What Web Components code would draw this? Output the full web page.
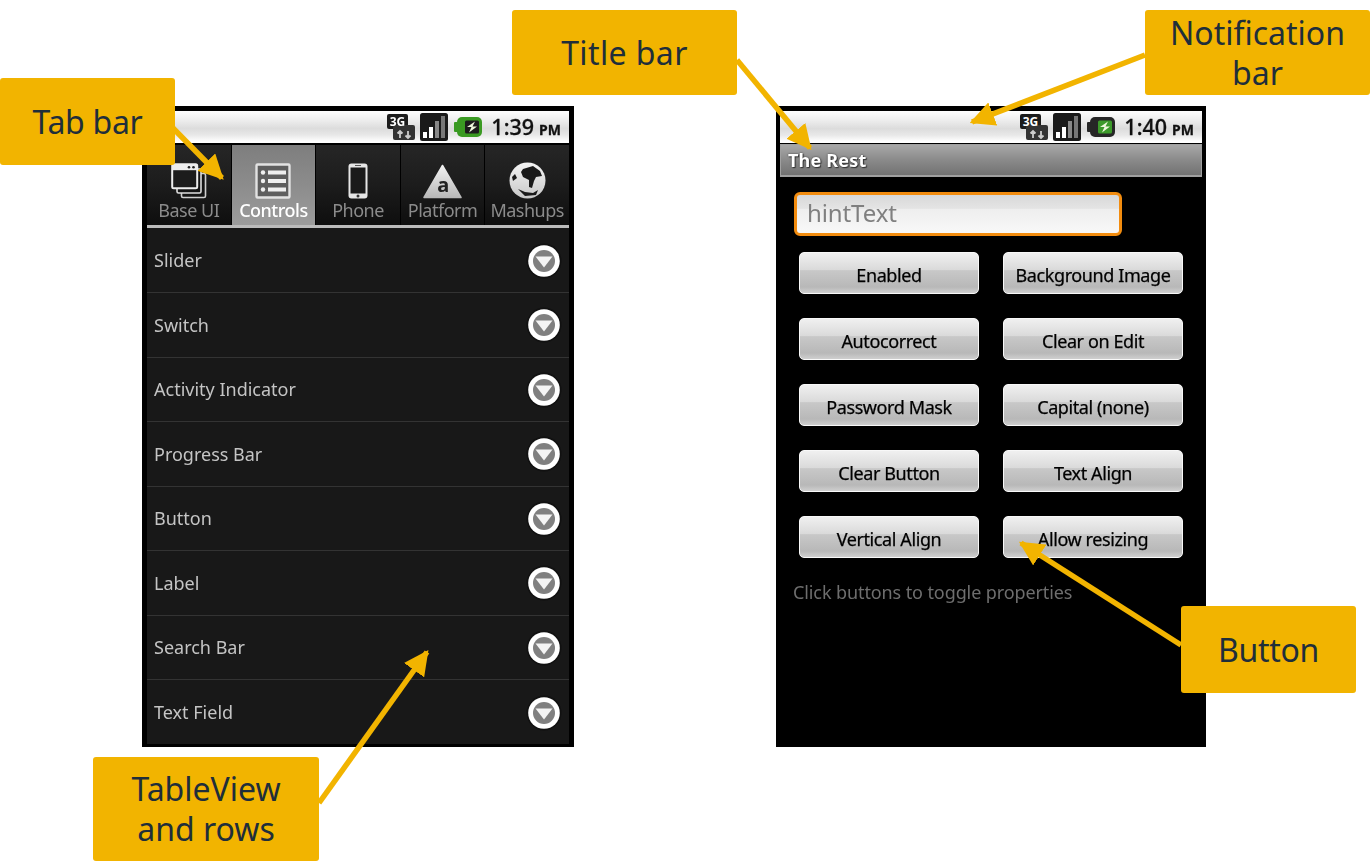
<!DOCTYPE html>
<html><head><meta charset="utf-8"><title>Android UI</title>
<style>
html,body{margin:0;background:#fff}
body{font-family:"Noto Sans","Open Sans",sans-serif}
x-canvas{width:1370px;height:868px}
</style></head>
<body>
<x-canvas>
  <x-phone style="left:142px;top:106px;width:432px;--pl:5px;--screenw:422px">
    <x-status time="1:39" body="#3a9a22" inner="#1c1c1c"></x-status>
    <x-tabbar>
      <x-tab label="Base UI" icon="windows"></x-tab>
      <x-tab label="Controls" icon="list" active></x-tab>
      <x-tab label="Phone" icon="phone"></x-tab>
      <x-tab label="Platform" icon="logo"></x-tab>
      <x-tab label="Mashups" icon="globe"></x-tab>
    </x-tabbar>
    <x-table>
      <x-row>Slider</x-row><x-row>Switch</x-row><x-row>Activity Indicator</x-row><x-row>Progress Bar</x-row>
      <x-row>Button</x-row><x-row>Label</x-row><x-row>Search Bar</x-row><x-row>Text Field</x-row>
    </x-table>
  </x-phone>

  <x-phone style="left:776px;top:106px;width:430px;--pl:4px;--screenw:422px">
    <x-status time="1:40" body="#262626" inner="#3c9a2a"></x-status>
    <x-titlebar>The Rest</x-titlebar>
    <x-form>
      <x-input>hintText</x-input>
      <x-btngrid>
        <x-btn>Enabled</x-btn><x-btn>Background Image</x-btn>
        <x-btn>Autocorrect</x-btn><x-btn>Clear on Edit</x-btn>
        <x-btn>Password Mask</x-btn><x-btn>Capital (none)</x-btn>
        <x-btn>Clear Button</x-btn><x-btn>Text Align</x-btn>
        <x-btn>Vertical Align</x-btn><x-btn>Allow resizing</x-btn>
      </x-btngrid>
      <x-hint>Click buttons to toggle properties</x-hint>
    </x-form>
  </x-phone>

  <x-arrows></x-arrows>

  <x-callout style="left:0;top:78px;width:175px;height:87px;letter-spacing:-.3px">Tab bar</x-callout>
  <x-callout style="left:512px;top:10px;width:225px;height:85px;letter-spacing:.4px">Title bar</x-callout>
  <x-callout style="left:1145px;top:10px;width:225px;height:85px">Notification<br>bar</x-callout>
  <x-callout style="left:1181px;top:606px;width:175px;height:87px;letter-spacing:-.3px">Button</x-callout>
  <x-callout style="left:93px;top:757px;width:226px;height:104px">TableView<br>and rows</x-callout>
</x-canvas>
<script>
function def(name, css, html, init){
  customElements.define(name, class extends HTMLElement{
    constructor(){super();const r=this.attachShadow({mode:'open'});
      r.innerHTML='<style>'+css+'</style>'+(typeof html==='function'?html(this):html);}
    connectedCallback(){ if(init) init(this); }
  });
}
const ICONS={
 windows:`<svg width="36" height="36" viewBox="0 0 36 36" fill="none"><rect x="10.500" y="10.500" width="24" height="24" rx="1.500" fill="#141414" stroke="#cfcfcf" stroke-width="1.600"/><rect x="6" y="6" width="24" height="24" rx="1.500" fill="#141414" stroke="#dedede" stroke-width="1.600"/><rect x="1.200" y="1.200" width="25" height="24" rx="1.500" fill="#1c1c1c" stroke="#eee" stroke-width="2"/><rect x="1.200" y="1.200" width="25" height="6" fill="#eee"/><circle cx="18" cy="4.200" r="1.300" fill="#222"/><circle cx="22.500" cy="4.200" r="1.300" fill="#222"/></svg>`,
 list:`<svg width="36" height="36" viewBox="0 0 36 36"><rect x="1.500" y="1.500" width="33" height="33" rx="1" fill="#5e5e5e" stroke="#e2e2e2" stroke-width="2.400"/><g fill="#efefef"><circle cx="8" cy="9.500" r="2.200"/><circle cx="8" cy="18" r="2.200"/><circle cx="8" cy="26.500" r="2.200"/><rect x="13" y="7.500" width="18" height="4"/><rect x="13" y="16" width="18" height="4"/><rect x="13" y="24.500" width="18" height="4"/></g></svg>`,
 phone:`<svg width="20" height="36" viewBox="0 0 20 36"><rect x=".5" y=".5" width="19" height="35" rx="3" fill="#e6e6e6"/><rect x="2.500" y="4.500" width="15" height="26" fill="#1a1a1a"/><rect x="7" y="2" width="6" height="1" fill="#555"/><circle cx="10" cy="33" r="1.500" fill="#333"/></svg>`,
 logo:`<svg width="39" height="35" viewBox="0 0 39 35"><defs><linearGradient id="lg" x1="0" y1="0" x2="0" y2="1"><stop offset="0" stop-color="#f2f2f2"/><stop offset="1" stop-color="#b8b8b8"/></linearGradient></defs><path d="M19.500 1.500 L38 33.500 H1 Z" fill="url(#lg)" stroke="url(#lg)" stroke-width="1.500" stroke-linejoin="round"/><text x="20" y="27.500" font-family="Noto Sans,sans-serif" font-size="20" font-weight="700" text-anchor="middle" fill="#222">a</text></svg>`,
 globe:`<svg width="37" height="37" viewBox="0 0 37 37"><defs><linearGradient id="gg" x1="0" y1="0" x2="0" y2="1"><stop offset="0" stop-color="#f4f4f4"/><stop offset="1" stop-color="#c8c8c8"/></linearGradient></defs><circle cx="18.500" cy="18.500" r="18" fill="url(#gg)"/><path d="M14 7 L24 4 L31 9 L33 14 L27 15 L25 19 L23 26 L20 25 L20 18 L14 15 L12 10Z" fill="#1a1a1a"/><path d="M3 15 L6 12 L8 16 L4 19Z" fill="#1a1a1a"/><path d="M9 27 L16 30 L24 31 L29 28 L27 33 L16 34Z" fill="#1a1a1a"/></svg>`
};
def('x-canvas',':host{display:block;position:relative;overflow:hidden;background:#fff}','<slot></slot>');
def('x-phone',`:host{position:absolute;display:flex;flex-direction:column;box-sizing:border-box;height:641px;background:#000;padding:5px 0 3px var(--pl)}
 .s{display:flex;flex-direction:column;width:var(--screenw);height:633px;filter:blur(.4px)}`,'<div class="s"><slot></slot></div>');
def('x-status',`:host{display:flex;align-items:center;justify-content:flex-end;box-sizing:border-box;height:33px;flex:none;padding-right:8px;
  background:linear-gradient(#fefefe 0,#f0f0f0 25%,#dcdcdc 55%,#e8e8e8 75%,#fff 95%);color:#111;border-bottom:1px solid #000}
 .t{font:500 21.500px "Noto Sans",sans-serif;margin-left:9px;white-space:nowrap;line-height:30px;-webkit-text-stroke:.3px #111}
 .t small{font:700 14px "Noto Sans",sans-serif;margin-left:5px}
 svg{display:block;flex:none}
 .s{margin-right:5px}.b{margin-left:1px}`,
 el=>{const c=el.getAttribute('body'),n=el.getAttribute('inner');return `
 <svg class="s" width="28" height="28" viewBox="0 0 28 28"><rect x="0" y="1" width="21" height="15" rx="2" fill="#1c1c1c"/><rect x="6" y="12" width="22" height="15" rx="2" fill="#333"/>
 <text x="10.500" y="13" font-family="Noto Sans,sans-serif" font-weight="700" font-size="12" fill="#fff" text-anchor="middle">3G</text>
 <path d="M13 25v-7m-2.500 2.500L13 18l2.500 2.500M21 18v7m-2.500-2.500L21 25l2.500-2.500" stroke="#ccc" stroke-width="1.800" fill="none"/></svg>
 <svg class="s" width="28" height="28" viewBox="0 0 28 28"><rect width="28" height="28" rx="2.500" fill="#1a1a1a"/><rect x="3" y="19" width="4" height="6" fill="#fff"/><rect x="9" y="14" width="4" height="11" fill="#fff"/><rect x="15" y="8" width="4" height="17" fill="#888"/><rect x="21" y="3" width="4" height="22" fill="#777"/></svg>
 <svg class="b" width="28" height="20" viewBox="0 0 28 20"><rect x="3" y="0" width="25" height="20" rx="5" fill="${c}"/><rect x="0" y="5" width="4" height="10" rx="1" fill="${c}"/><rect x="11" y="3.500" width="14" height="13" rx="1.500" fill="${n}"/><path d="M21 4.500 L13 10 H17.500 L15 15.500 L23 9.500 H18.500 Z" fill="#eef7dc"/></svg>
 <span class="t">${el.getAttribute('time')}<small>PM</small></span>`});
def('x-tabbar',`:host{display:flex;flex:none;box-sizing:border-box;height:84px;gap:1px;padding-top:1px;border-bottom:3px solid #bbb;background:#000}`,'<slot></slot>');
def('x-tab',`:host{flex:1 1 0;min-width:0;display:flex;flex-direction:column;align-items:center;
  background:linear-gradient(#262626,#1c1c1c 50%,#0e0e0e);color:#8b8b8b;font-size:18px;line-height:22px;letter-spacing:-.5px;white-space:nowrap}
 :host([active]){background:linear-gradient(#7e7e7e,#8c8c8c 50%,#9c9c9c);color:#fff;font-weight:500}
 .i{height:54px;flex:none;display:flex;align-items:flex-end;justify-content:center;box-sizing:border-box}
 svg{display:block}`,
 el=>`<div class="i">${ICONS[el.getAttribute('icon')]}</div><div>${el.getAttribute('label')}</div>`);
def('x-table',`:host{display:flex;flex-direction:column;flex:1;min-height:0;background:#181818;padding-top:.5px;overflow:hidden}`,'<slot></slot>');
def('x-row',`:host{display:flex;align-items:center;justify-content:space-between;box-sizing:border-box;height:64.5px;flex:none;padding:0 7px;color:#c4c4c4;font-size:18px;border-bottom:1px solid #333}
 :host(:last-child){border-bottom:0}
 svg{display:block;margin-top:1px}`,
 `<slot></slot><svg width="36" height="36" viewBox="0 0 36 36"><circle cx="18" cy="18" r="17.500" fill="#111"/><circle cx="18" cy="18" r="15.800" fill="#fff"/><circle cx="18" cy="18" r="11" fill="#808080"/><path d="M9.500 13.500 H26.500 L18 24.500 Z" fill="#f4f4f4"/></svg>`);
def('x-titlebar',`:host{display:flex;align-items:center;flex:none;box-sizing:border-box;height:33px;padding-left:7px;color:#fff;font-weight:700;font-size:18px;letter-spacing:.2px;
  text-shadow:0 0 2px #333,1px 1px 1px #333;background:linear-gradient(#a8a8a8,#8a8a8a 50%,#727272);border:1px solid #a0a0a0;border-bottom-width:2px}`,'<slot></slot>');
def('x-form',`:host{display:flex;flex-direction:column;flex:1;padding:15px 0 0 14px}`,'<slot></slot>');
def('x-input',`:host{display:flex;align-items:center;box-sizing:border-box;width:328px;height:44px;flex:none;border:3px solid #f28c0f;border-radius:6px;padding:0 0 4px 10px;color:#808080;font-size:24px;letter-spacing:-.1px;
  background:linear-gradient(#d8d8d8,#e4e4e4 35%,#eeeeee 38%,#f8f8f8)}`,'<slot></slot>');
def('x-btngrid',`:host{display:grid;grid-template-columns:180px 180px;grid-auto-rows:42px;column-gap:24px;row-gap:24px;margin:16px 0 0 5px}`,'<slot></slot>');
def('x-btn',`:host{display:flex;align-items:center;justify-content:center;box-sizing:border-box;padding-top:4px;border:1px solid #f8f8f8;border-radius:5px;color:#000;font-size:18px;letter-spacing:-.4px;-webkit-text-stroke:.25px #000;white-space:nowrap;
  background:linear-gradient(#f0f0f0,#dadada 42%,#c8c8c8 44%,#b8b8b8 85%,#cfcfcf)}`,'<slot></slot>');
def('x-hint',`:host{display:block;color:#6e6e6e;font-size:18px;line-height:24px;letter-spacing:-.1px;margin:22px 0 0 -1px}`,'<slot></slot>');
def('x-callout',`:host{position:absolute;display:flex;align-items:center;justify-content:center;text-align:center;box-sizing:border-box;background:#f2b400;border-radius:3px;color:#1f2e3a;font:32px/40px "Noto Sans",sans-serif;z-index:2}`,'<slot></slot>');
def('x-arrows',`:host{position:absolute;inset:0;display:block;z-index:1;pointer-events:none}svg{display:block}`,
 `<svg width="1370" height="868" viewBox="0 0 1370 868"><defs><marker id="a" viewBox="0 0 10 10" refX="9" refY="5" markerWidth="4.500" markerHeight="4.500" orient="auto-start-reverse"><path d="M0 0 L10 5 L0 10 Z" fill="#f2b400"/></marker></defs>
 <g stroke="#f2b400" stroke-width="5.500" fill="none">
 <path d="M168 123 L222 178" marker-end="url(#a)"/><path d="M737 60 L810 148" marker-end="url(#a)"/><path d="M1145 55 L972 122" marker-end="url(#a)"/><path d="M1181 645 L1021 543" marker-end="url(#a)"/><path d="M319 803 L427 652" marker-end="url(#a)"/></g></svg>`);
</script>
</body></html>
